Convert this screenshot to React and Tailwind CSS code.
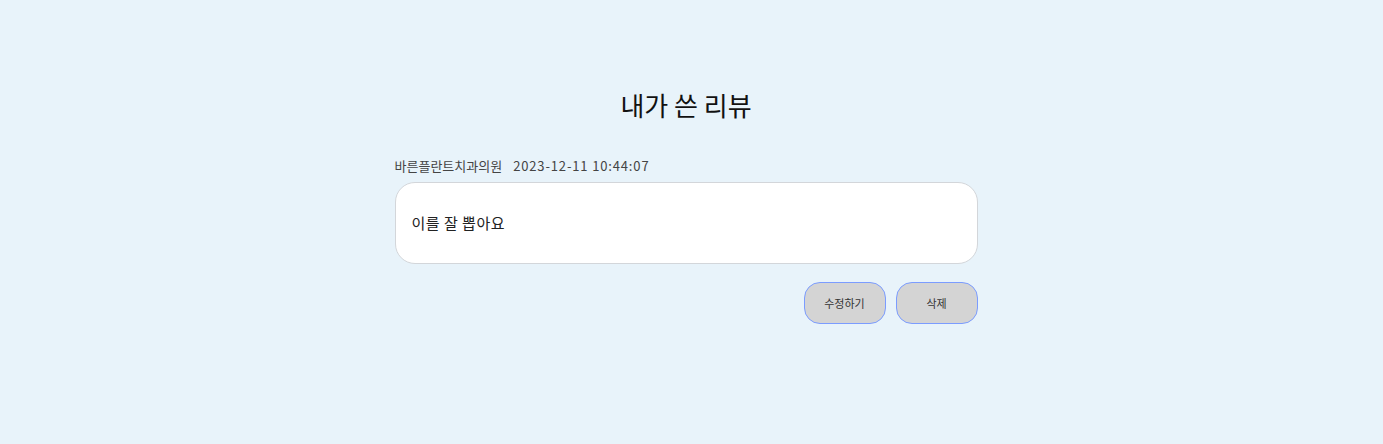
export default function App() {
  return (
    <div
      className="min-h-[444px] w-full bg-[#e8f3fa] pr-[11px] text-[#222]"
      style={{ fontFamily: '"Noto Sans CJK KR", "Noto Sans", sans-serif' }}
    >
      <div className="mx-auto flex w-[583px] flex-col pt-[86px]">
        <h1 className="text-center text-[26px] leading-[38px] text-[#111]">내가 쓴 리뷰</h1>

        <div className="mt-[32px] flex gap-[11px] text-[13px] leading-[20px] text-[#444]">
          <span>바른플란트치과의원</span>
          <span className="tracking-[0.85px]">2023-12-11 10:44:07</span>
        </div>

        <div className="mt-[6px] flex h-[82px] items-center rounded-[20px] border border-[#d3d6da] bg-white px-[16px] text-[15px] text-[#222]">
          <span className="tracking-[0.5px]">이를 잘 뽑아요</span>
        </div>

        <div className="mt-[18px] flex justify-end gap-[10px]">
          <button className="h-[42px] w-[82px] rounded-[16px] border border-[#7b9cff] bg-[#d4d4d4] text-[11px] text-[#333]">
            수정하기
          </button>
          <button className="h-[42px] w-[82px] rounded-[16px] border border-[#7b9cff] bg-[#d4d4d4] text-[11px] text-[#333]">
            삭제
          </button>
        </div>
      </div>
    </div>
  );
}
